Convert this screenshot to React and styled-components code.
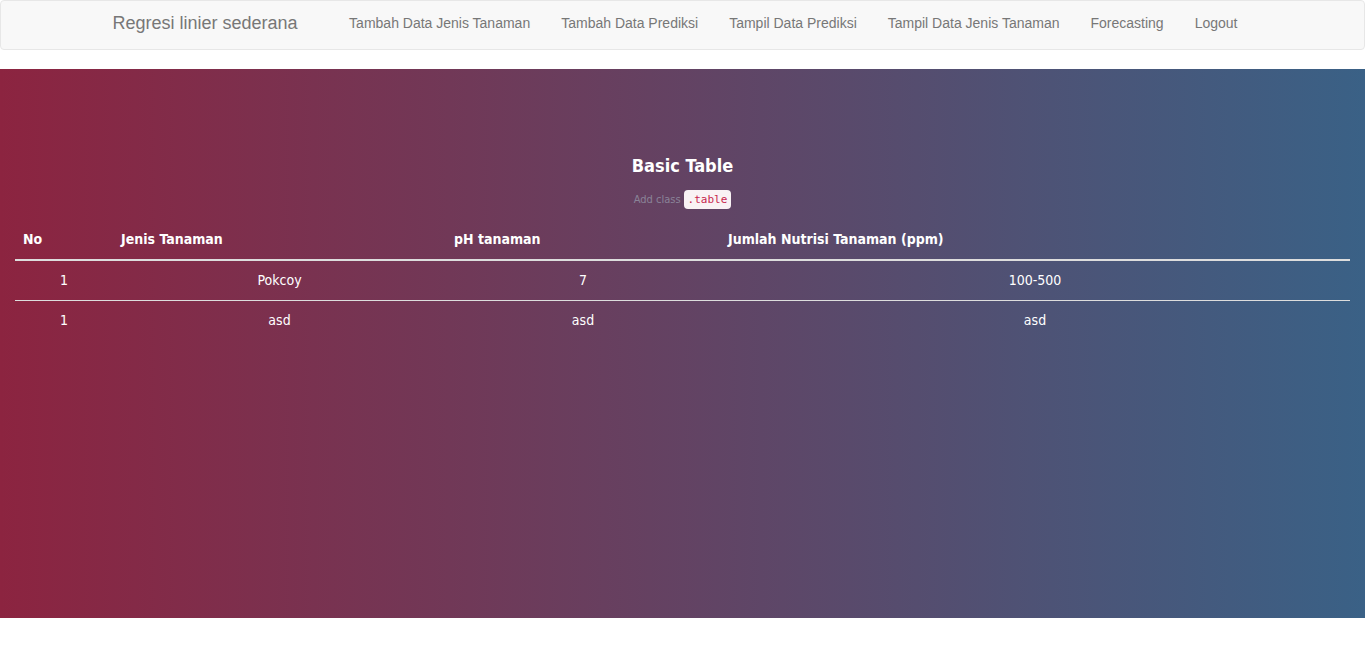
import React from "react";
import styled, { createGlobalStyle } from "styled-components";

const Global = createGlobalStyle`
  html, body { margin: 0; padding: 0; background: #fff; }
  body { font-family: "Liberation Sans", Arial, sans-serif; font-size: 14px; line-height: 1.42857; color: #333; }
  * { box-sizing: border-box; }
`;

const NavBar = styled.nav`
  height: 50px;
  background: #f8f8f8;
  border: 1px solid #e7e7e7;
  border-radius: 4px;
  margin-bottom: 19px;
`;

const NavInner = styled.div`
  width: 1170px;
  margin: 0 auto;
  padding: 0 15px;
  display: flex;
  align-items: stretch;
  height: 48px;
`;

const Brand = styled.a`
  flex: none;
  white-space: nowrap;
  margin-left: -15px;
  padding: 12px 15px;
  font-size: 18px;
  line-height: 20px;
  color: #777;
  text-decoration: none;
`;

const NavList = styled.ul`
  flex: none;
  display: flex;
  list-style: none;
  margin: 0 0 0 21px;
  padding: 0;
`;

const NavItem = styled.li`
  flex: none;
`;

const NavLink = styled.a`
  display: block;
  white-space: nowrap;
  padding: 12px 15.5px;
  font-size: 14px;
  line-height: 20px;
  color: #777;
  text-decoration: none;
`;

const Hero = styled.section`
  height: 549px;
  padding: 84px 15px 0;
  background: linear-gradient(to right, #8c2440, #3a6186);
  font-family: "DejaVu Sans Condensed", "Liberation Sans Narrow", sans-serif;
  font-stretch: condensed;
  color: #fff;
`;

const Title = styled.h4`
  margin: 0;
  text-align: center;
  font-size: 18px;
  line-height: 26px;
  font-weight: 700;
  color: #fff;
`;

const Sub = styled.p`
  margin: 10px 0 0;
  text-align: center;
  font-size: 11px;
  line-height: 22px;
  color: #8a8398;
`;

const Code = styled.code`
  font-family: "DejaVu Sans Mono", "Liberation Mono", monospace;
  font-size: 11px;
  padding: 3px 4px;
  margin-left: 3px;
  color: #c7254e;
  background: #f9f2f4;
  border-radius: 4px;
`;

const Table = styled.table`
  margin-top: 9px;
  width: 100%;
  border-collapse: collapse;
  table-layout: fixed;
  font-size: 14px;
`;

const Th = styled.th`
  padding: 8px;
  line-height: 23px;
  text-align: left;
  font-weight: 700;
  color: #fff;
  border-bottom: 2px solid #ddd;
`;

const Td = styled.td`
  padding: 8px;
  line-height: 23px;
  text-align: center;
  color: #fff;
  border-top: ${(p) => (p.$first ? "0" : "1px solid #ddd")};
`;

const links = [
  "Tambah Data Jenis Tanaman",
  "Tambah Data Prediksi",
  "Tampil Data Prediksi",
  "Tampil Data Jenis Tanaman",
  "Forecasting",
  "Logout",
];

const rows = [
  ["1", "Pokcoy", "7", "100-500"],
  ["1", "asd", "asd", "asd"],
];

export default function App() {
  return (
    <>
      <Global />
      <NavBar>
        <NavInner>
          <Brand href="#">Regresi linier sederana</Brand>
          <NavList>
            {links.map((l) => (
              <NavItem key={l}>
                <NavLink href="#">{l}</NavLink>
              </NavItem>
            ))}
          </NavList>
        </NavInner>
      </NavBar>
      <Hero>
        <Title>Basic Table</Title>
        <Sub>
          Add class<Code>.table</Code>
        </Sub>
        <Table>
          <colgroup>
            <col style={{ width: 98 }} />
            <col style={{ width: 333 }} />
            <col style={{ width: 274 }} />
            <col />
          </colgroup>
          <thead>
            <tr>
              <Th>No</Th>
              <Th>Jenis Tanaman</Th>
              <Th>pH tanaman</Th>
              <Th>Jumlah Nutrisi Tanaman (ppm)</Th>
            </tr>
          </thead>
          <tbody>
            {rows.map((r, i) => (
              <tr key={i}>
                {r.map((c, j) => (
                  <Td key={j} $first={i === 0}>
                    {c}
                  </Td>
                ))}
              </tr>
            ))}
          </tbody>
        </Table>
      </Hero>
    </>
  );
}
